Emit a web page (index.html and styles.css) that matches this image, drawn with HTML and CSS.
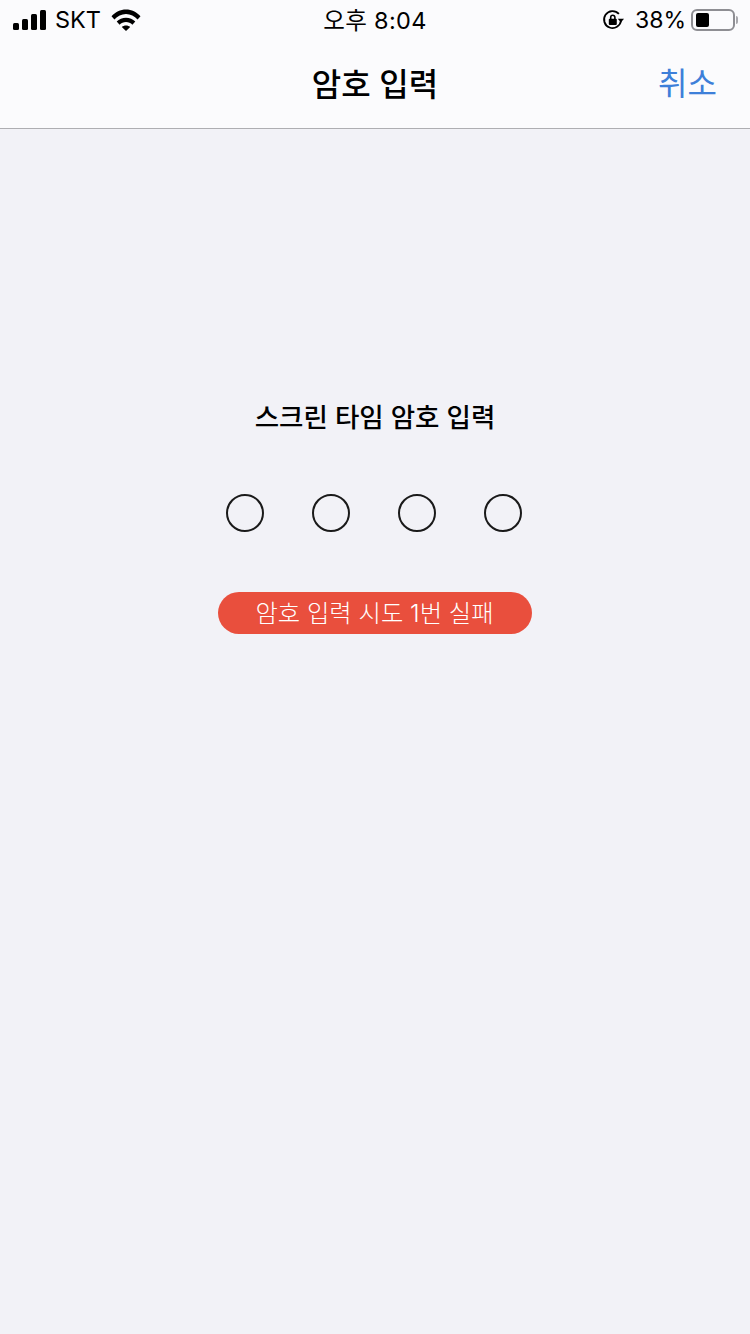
FILE: index.html

```html
<!DOCTYPE html>
<html lang="ko">
<head>
  <meta charset="UTF-8" />
  <meta name="viewport" content="width=device-width, initial-scale=1.0" />
  <title>암호 입력</title>
  <link rel="stylesheet" href="styles.css">
</head>
<body>
  <header class="top">
    <div class="status">
      <div class="status-left">
        <div class="signal"><i class="b1"></i><i class="b2"></i><i class="b3"></i><i class="b4"></i></div>
        <span class="carrier">SKT</span>
        <svg class="wifi" width="30" height="22" viewBox="0 0 30 22">
          <path d="M0.500 7.200C4.300 3.200 9.400 0.600 15 0.600C20.600 0.600 25.700 3.200 29.500 7.200L26.600 10.400C23.500 7.100 19.500 5 15 5C10.500 5 6.500 7.100 3.400 10.400Z"/>
          <path d="M5.700 12.600C8.100 10.200 11.400 8.700 15 8.700C18.600 8.700 21.900 10.200 24.300 12.600L21.400 15.800C19.700 14.100 17.500 13.100 15 13.100C12.500 13.100 10.300 14.100 8.600 15.800Z"/>
          <path d="M10.800 18C12 17 13.400 16.500 15 16.500C16.600 16.500 18 17 19.200 18L15 22Z"/>
        </svg>
      </div>
      <div class="clock">오후 8:04</div>
      <div class="status-right">
        <svg class="lock" width="22" height="22" viewBox="0 0 22 22">
          <path class="lock-ring" d="M19 11.500A8.500 8.500 0 1 1 16.900 4.900"/>
          <path d="M15.800 9.800L22 9.800L18.900 13.600Z"/>
          <rect x="6.800" y="9.800" width="8" height="6.200" rx="1"/>
          <path class="lock-hasp" d="M8.700 10V8.300A2.100 2.100 0 0 1 12.900 8.300V10"/>
        </svg>
        <span class="percent">38%</span>
        <div class="battery"><div class="battery-level"></div></div>
        <div class="battery-cap"></div>
      </div>
    </div>
    <nav class="nav">
      <h1>암호 입력</h1>
      <a class="cancel">취소</a>
    </nav>
  </header>

  <main class="passcode">
    <h2>스크린 타임 암호 입력</h2>
    <div class="dots">
      <span></span><span></span><span></span><span></span>
    </div>
    <div class="failed">암호 입력 시도 1번 실패</div>
  </main>
</body>
</html>
```

FILE: styles.css

```css
* { box-sizing: border-box; }
html, body { margin: 0; height: 100%; }
body { width: 750px; height: 1334px; overflow: hidden; background: #f2f2f7; color: #000; font-family: "Inter", "Noto Sans CJK KR", sans-serif; }

.top { height: 129px; background: #fbfbfd; border-bottom: 1px solid #aeaeb2; }

.status { height: 40px; display: flex; align-items: center; justify-content: space-between; padding: 0 12px 0 13px; position: relative; }
.status-left { display: flex; align-items: center; width: 200px; }
.signal { display: flex; align-items: flex-end; gap: 3px; height: 20px; margin-top: -1px; }
.signal i { display: block; width: 6px; background: #000; border-radius: 1.5px; }
.signal .b1 { height: 7px; }
.signal .b2 { height: 11px; }
.signal .b3 { height: 16px; }
.signal .b4 { height: 20px; }
.carrier { font-size: 23.5px; font-weight: 400; margin: -1px 0 0 9px; }
.wifi { margin-left: 10px; margin-top: -1px; }

.clock { position: absolute; left: 0; right: 0; top: 2px; text-align: center; font-size: 23.5px; font-weight: 400; letter-spacing: 0.3px; }

.status-right { display: flex; align-items: center; }
.lock { margin: 0 11px 0 0; }
.lock-ring { fill: none; stroke: #000; stroke-width: 1.8; }
.lock-hasp { fill: none; stroke: #000; stroke-width: 1.6; }
.percent { font-size: 23px; font-weight: 400; margin: 0 5px 0 0; }
.battery { width: 44px; height: 22px; padding: 2px 3px; border: 2px solid #8e8e93; border-radius: 6px; }
.battery-level { width: 13px; height: 14px; background: #000; border-radius: 2px; }
.battery-cap { width: 2px; height: 8px; margin-left: 1px; background: #a8a8ad; border-radius: 0 2px 2px 0; }

.nav { height: 88px; display: flex; align-items: center; justify-content: center; position: relative; padding-bottom: 4px; }
.nav h1 { margin: 0; font-size: 32px; font-weight: 500; }
.cancel { position: absolute; right: 33px; top: 18px; font-size: 32px; font-weight: 400; color: #3d7fd9; }

.passcode { display: flex; flex-direction: column; align-items: center; padding-top: 270px; }
.passcode h2 { margin: 0; font-size: 26.5px; font-weight: 500; line-height: 37px; }
.dots { display: flex; gap: 48px; margin: 58px 2px 0 0; }
.dots span { width: 38px; height: 38px; border: 2.500px solid #1a1a1a; border-radius: 50%; }
.failed { width: 314px; height: 42px; margin-top: 60px; padding: 0 1px 3px 0; background: #e94f3d; color: #fff; border-radius: 21px; display: flex; align-items: center; justify-content: center; font-size: 24.300px; font-weight: 300; }
```
